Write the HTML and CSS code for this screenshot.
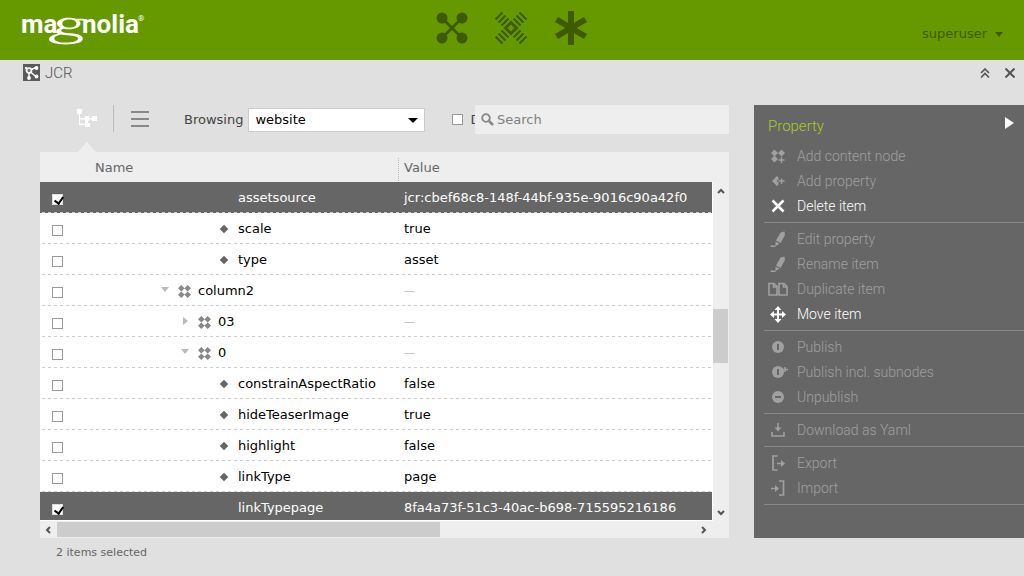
FILE: index.html
```html
<!DOCTYPE html>
<html lang="en">
<head>
<meta charset="utf-8">
<title>JCR</title>
<link rel="stylesheet" href="styles.css">
</head>
<body>
<svg class="defs" aria-hidden="true">
  <symbol id="node" viewBox="0 0 13 13"><path fill="currentColor" d="M3.300 0l3.200 3.200L9.700 0l3.300 3.300-3.300 3.300-3.200-3.200-3.200 3.200L0 3.300zM3.300 6.400l3.200 3.200 3.200-3.200L13 9.700 9.700 13 6.500 9.800 3.300 13 0 9.700z"/></symbol>
  <symbol id="pencil" viewBox="0 0 20 18"><path fill="currentColor" d="M12.500 1.500L16.500.500 17 4l-4.500 8-4.500-2.500zM7.500 10.500l4 2.300L7.500 15zM2.500 14.500h5V16h-5z"/></symbol>
</svg>
<header class="topbar">
  <a class="logo" href="#" aria-label="magnolia">
    <svg width="124" height="34" viewBox="0 0 124 34">
      <text class="logo-text" x="-1" y="20">ma</text>
      <text class="logo-text" x="60" y="20">nolia</text>
      <text class="logo-reg" x="116" y="8">®</text>
      <path fill="#fff" fill-rule="evenodd" d="M47 4.700c2.500 0 4.700.3 6.500 1H62v1.800h-5c1 .9 1.500 1.900 1.500 3 0 3.300-4.800 5.800-11.500 5.800-1.900 0-3.700-.2-5.200-.6-1.700.4-2.600.9-2.600 1.700 0 1.400 2.500 2.100 6.500 2.500 8.600.6 15.100 1.600 15.100 5.800 0 3.600-7 5.700-17.300 5.700-9.600 0-16.500-1.800-16.500-5.100 0-2.700 3.500-4.600 8.700-5.600-1-.6-1.500-1.300-1.500-2.200 0-1.600 1.700-2.700 4.400-3.400-2.300-1-3.600-2.600-3.600-4.500 0-3.400 4.800-5.900 11.500-5.900zM47.300 6.500c-4.300 0-7 1.600-7 4 0 2.500 2.700 4.100 7 4.100 4.400 0 7.100-1.600 7.100-4.100 0-2.400-2.700-4-7.100-4zM39 21.500c-4.300.7-6.700 2-6.700 3.900 0 2.700 4.700 4.200 11.700 4.200s12-1.500 12-4c0-2.300-4.500-2.900-10.500-3.400-2.400-.2-4.600-.3-6.500-.7z"/>
    </svg>
  </a>
  <nav class="apps" aria-label="Main">
    <button aria-label="Apps"><svg width="32" height="32" viewBox="0 0 32 32"><g fill="currentColor"><circle cx="6" cy="6" r="5.500"/><circle cx="26" cy="6" r="5.500"/><circle cx="6" cy="26" r="5.500"/><circle cx="26" cy="26" r="5.500"/></g><path d="M6 6l20 20M26 6L6 26" stroke="currentColor" stroke-width="3"/></svg></button>
    <button aria-label="Pulse"><svg width="34" height="34" viewBox="0 0 34 34" fill="none" stroke="currentColor"><path stroke-width="3" d="M17 11.500l5.500 5.500-5.500 5.500-5.500-5.500z"/><path stroke-width="2.200" d="M14.500 7.500l-7 7M11.500 4.500l-7 7M8.500 1.500l-7 7M19.500 7.500l7 7M22.500 4.500l7 7M25.500 1.500l7 7M7.500 19.500l7 7M4.500 22.500l7 7M1.500 25.500l7 7M26.500 19.500l-7 7M29.500 22.500l-7 7M32.500 25.500l-7 7"/></svg></button>
    <button aria-label="Favorites"><svg width="34" height="34" viewBox="0 0 34 34" stroke="currentColor" stroke-width="6"><path d="M17 0v34M2.500 8.500l29 17M2.500 25.500l29-17"/></svg></button>
  </nav>
  <button class="user">superuser <svg width="8" height="5" viewBox="0 0 8 5"><path fill="currentColor" d="M0 0h8L4 5z"/></svg></button>
</header>

<div class="appbar">
  <svg width="17" height="17" viewBox="0 0 17 17"><path fill="#5b5b5b" d="M0 0h17v17H0z"/><path d="M6 6.500l7-3M6 6.500V14M7.500 8l6 5" stroke="#fff" stroke-width="1.500" fill="none"/><circle cx="6" cy="6.500" r="2.500" fill="#777" stroke="#fff" stroke-width="1.700"/><g fill="#fff"><circle cx="13.500" cy="4" r="1.900"/><circle cx="13.500" cy="12.500" r="1.900"/><circle cx="6" cy="14" r="1.900"/><circle cx="3" cy="4" r="1.300"/></g></svg>
  <h1>JCR</h1>
  <button class="window-button" aria-label="Collapse"><svg width="10" height="10" viewBox="0 0 10 10"><path d="M1 5l4-4 4 4M1 9.500l4-4 4 4" fill="none" stroke="currentColor" stroke-width="1.600"/></svg></button>
  <button class="window-button" aria-label="Close"><svg width="10" height="10" viewBox="0 0 10 10"><path d="M.5.500l9 9M9.500.500l-9 9" stroke="currentColor" stroke-width="2"/></svg></button>
</div>

<div class="app">
  <main class="browser">
    <div class="toolbar">
      <button class="view active" aria-label="Tree view"><svg width="20" height="19" viewBox="0 0 20 19"><path fill="#fff" d="M0 0h5v5H3v4h5V7h4v2h3V7h5v5h-5v-1.500h-3V12h-1v2h2v4H8v-2H2V5H0zM3 10.500v4h5V12v-1.500z"/></svg></button>
      <button class="view" aria-label="List view"><svg width="18" height="16" viewBox="0 0 18 16"><path d="M0 1h18M0 8h18M0 15h18" stroke="#888" stroke-width="2"/></svg></button>
      <label class="browsing" for="workspace">Browsing</label>
      <div class="select"><select id="workspace"><option>website</option></select><svg width="10" height="5" viewBox="0 0 10 5"><path d="M0 0h10L5 5z"/></svg></div>
      <label class="deleted"><input type="checkbox"><span>D</span></label>
      <div class="search"><svg width="13" height="13" viewBox="0 0 13 13"><circle cx="5" cy="5" r="3.800" fill="none" stroke="#888" stroke-width="1.800"/><path d="M8 8l4 4" stroke="#888" stroke-width="2.500"/></svg><input type="search" placeholder="Search" aria-label="Search"></div>
    </div>
    <div class="frame">
      <div class="rows">
        <table>
          <colgroup><col class="col-check"><col class="col-name"><col></colgroup>
          <thead><tr><th></th><th>Name</th><th class="value">Value</th></tr></thead>
          <tbody>
            <tr class="selected"><td><input type="checkbox" checked aria-label="assetsource"></td><td class="l4">assetsource</td><td>jcr:cbef68c8-148f-44bf-935e-9016c90a42f0</td></tr>
            <tr><td><input type="checkbox" aria-label="scale"></td><td class="l3"><i class="prop"></i>scale</td><td>true</td></tr>
            <tr><td><input type="checkbox" aria-label="type"></td><td class="l3"><i class="prop"></i>type</td><td>asset</td></tr>
            <tr><td><input type="checkbox" aria-label="column2"></td><td class="l1"><i class="open"></i><svg class="node"><use href="#node"/></svg>column2</td><td class="empty">—</td></tr>
            <tr><td><input type="checkbox" aria-label="03"></td><td class="l2"><i class="closed"></i><svg class="node"><use href="#node"/></svg>03</td><td class="empty">—</td></tr>
            <tr><td><input type="checkbox" aria-label="0"></td><td class="l2"><i class="open"></i><svg class="node"><use href="#node"/></svg>0</td><td class="empty">—</td></tr>
            <tr><td><input type="checkbox" aria-label="constrainAspectRatio"></td><td class="l3"><i class="prop"></i>constrainAspectRatio</td><td>false</td></tr>
            <tr><td><input type="checkbox" aria-label="hideTeaserImage"></td><td class="l3"><i class="prop"></i>hideTeaserImage</td><td>true</td></tr>
            <tr><td><input type="checkbox" aria-label="highlight"></td><td class="l3"><i class="prop"></i>highlight</td><td>false</td></tr>
            <tr><td><input type="checkbox" aria-label="linkType"></td><td class="l3"><i class="prop"></i>linkType</td><td>page</td></tr>
            <tr class="selected"><td><input type="checkbox" checked aria-label="linkTypepage"></td><td class="l4">linkTypepage</td><td>8fa4a73f-51c3-40ac-b698-715595216186</td></tr>
          </tbody>
        </table>
      </div>
      <div class="vscroll">
        <svg width="8" height="6" viewBox="0 0 8 6"><path d="M1 5l3-3 3 3"/></svg>
        <div class="vtrack"><div class="vthumb"></div></div>
        <svg width="8" height="6" viewBox="0 0 8 6"><path d="M1 1l3 3 3-3"/></svg>
      </div>
      <div class="hscroll">
        <svg width="6" height="8" viewBox="0 0 6 8"><path d="M5 1L2 4l3 3"/></svg>
        <div class="htrack"><div class="hthumb"></div></div>
        <svg width="6" height="8" viewBox="0 0 6 8"><path d="M1 1l3 3-3 3"/></svg>
      </div>
    </div>
  </main>

  <aside class="actions">
    <div class="actions-head"><h2>Property</h2><button aria-label="Hide actions"><svg width="9" height="12" viewBox="0 0 9 12"><path fill="#fff" d="M0 0l9 6-9 6z"/></svg></button></div>
    <div class="group">
      <button disabled><svg viewBox="0 0 20 18"><path fill="currentColor" d="M6.500 1.500L10 5l3.500-3.500L17 5l-3.500 3.500L10 5 6.500 8.500 3 5zM6.500 7.500L10 11l-3.500 3.500L3 11zM6 5h1v6H6zM12.800 9h1.400v2.300h2.300v1.400h-2.300V15h-1.400v-2.300h-2.300v-1.400h2.300z"/></svg>Add content node</button>
      <button disabled><svg viewBox="0 0 20 18"><path fill="currentColor" d="M9 3L4 8l5 5 1.500-1.500V9H9V7h1.500V4.500zM12.800 5.500h1.400v1.800h2.300v1.400h-2.300v2.300h-1.400V8.700h-2.300V7.300h2.300z"/></svg>Add property</button>
      <button><svg viewBox="0 0 20 18"><path d="M4.500 2.500l11 11M15.500 2.500l-11 11" stroke="currentColor" stroke-width="2.600"/></svg>Delete item</button>
    </div>
    <div class="group">
      <button disabled><svg><use href="#pencil"/></svg>Edit property</button>
      <button disabled><svg><use href="#pencil"/></svg>Rename item</button>
      <button disabled><svg viewBox="0 0 20 18"><path d="M1 2.500h5L9 5.500V14H1zM11 2.500h5l3 3V14h-8zM5.500 3v3H9M15.500 3v3H19" fill="none" stroke="currentColor" stroke-width="1.600"/></svg>Duplicate item</button>
      <button><svg viewBox="0 0 20 18"><path d="M10 3v11M4 8.500h12" stroke="currentColor" stroke-width="2"/><path fill="currentColor" d="M10 0l3.500 4h-7zM10 17l3.500-4h-7zM2 8.500L6 5v7zM18 8.500L14 5v7z"/></svg>Move item</button>
    </div>
    <div class="group">
      <button disabled><svg viewBox="0 0 20 18"><circle cx="10" cy="8" r="6" fill="currentColor"/><path d="M10 5v6" stroke="#666" stroke-width="2"/></svg>Publish</button>
      <button disabled><svg viewBox="0 0 20 18"><circle cx="10" cy="8" r="6" fill="currentColor"/><path d="M10 5v6" stroke="#666" stroke-width="2"/><path d="M17 3v5M14 5.500h6" stroke="currentColor" stroke-width="1.500"/></svg>Publish incl. subnodes</button>
      <button disabled><svg viewBox="0 0 20 18"><circle cx="10" cy="8" r="6" fill="currentColor"/><path d="M7 8h6" stroke="#666" stroke-width="2"/></svg>Unpublish</button>
    </div>
    <div class="group">
      <button disabled><svg viewBox="0 0 20 18"><path d="M4 10v4h12v-4M10 1v7" fill="none" stroke="currentColor" stroke-width="1.600"/><path fill="currentColor" d="M6.500 5.500h7L10 9.500z"/></svg>Download as Yaml</button>
    </div>
    <div class="group">
      <button disabled><svg viewBox="0 0 20 18"><path d="M9.500 1H5v14h4.500M9 8.500h5" fill="none" stroke="currentColor" stroke-width="1.700"/><path fill="currentColor" d="M13 5l4 3.500-4 3.500z"/></svg>Export</button>
      <button disabled><svg viewBox="0 0 20 18"><path d="M11 1h4.500v14H11M3 8.500h5" fill="none" stroke="currentColor" stroke-width="1.700"/><path fill="currentColor" d="M7 5l4 3.500L7 12z"/></svg>Import</button>
    </div>
  </aside>
</div>
<footer class="status">2 items selected</footer>
</body>
</html>
```
FILE: styles.css
```css
* { box-sizing: border-box; }
body {
  margin: 0;
  height: 100vh;
  display: flex;
  flex-direction: column;
  background: #e0e0e0;
  color: #000;
  font: 13px/18px "DejaVu Sans", sans-serif;
  overflow: hidden;
}
button, input, select { font: inherit; color: inherit; margin: 0; }
button { padding: 0; border: 0; background: none; display: flex; align-items: center; }
svg { display: block; flex: none; }
h1, h2 { margin: 0; font-weight: 400; }
.defs { position: absolute; width: 0; height: 0; }

.topbar {
  flex: none;
  height: 60px;
  display: grid;
  grid-template-columns: 1fr auto 1fr;
  align-items: center;
  padding: 0 21px 0 22px;
  background: #690;
  color: #3e5b00;
}
.logo svg { overflow: visible; }
.logo-text { font: 700 26px Roboto, sans-serif; fill: #fff; }
.logo-reg { font: 8px Roboto, sans-serif; fill: #fff; }
.apps { display: flex; gap: 26px; padding: 0 1px 4px 0; }
.user { justify-self: end; gap: 8px; padding-top: 8px; }

.appbar {
  flex: none;
  height: 45px;
  display: flex;
  align-items: flex-start;
  gap: 5px;
  padding: 4px 9px 0 23px;
  color: #555;
}
.appbar h1 { flex: 1; font: 300 15px/18px Roboto, sans-serif; }
.window-button { height: 17px; margin-left: 10px; }

.app { flex: 1; min-height: 0; display: flex; gap: 25px; padding-left: 40px; }
.browser { flex: 1; min-width: 0; display: flex; flex-direction: column; }

.toolbar { flex: none; height: 47px; display: flex; align-items: flex-start; color: #444; }
.view { flex: none; position: relative; height: 27px; width: 52px; justify-content: center; }
.view.active { width: 74px; padding-left: 20px; border-right: 1px solid #bbb; }
.view.active::after {
  content: "";
  position: absolute;
  left: 38px;
  top: 37px;
  border: 9px solid transparent;
  border-top: 0;
  border-bottom: 10px solid #eee;
}
.browsing { padding: 6px 5px 0 18px; }
.select { flex: none; position: relative; margin-top: 3px; }
.select select {
  display: block;
  appearance: none;
  width: 177px;
  height: 24px;
  padding: 0 6px;
  border: 1px solid #ccc;
  border-radius: 0;
  background: #fff;
  color: #000;
}
.select svg { position: absolute; right: 7px; top: 10px; pointer-events: none; }
.deleted { flex: 1; min-width: 0; display: flex; gap: 7px; overflow: hidden; padding: 6px 0 0 27px; }
.search { flex: none; display: flex; align-items: center; gap: 3px; width: 254px; height: 29px; padding-left: 6px; background: #eee; }
.search input { flex: 1; min-width: 0; padding: 0; border: 0; background: none; outline: 0; }
.search input::placeholder { color: #808080; opacity: 1; }

input[type="checkbox"] {
  appearance: none;
  flex: none;
  display: block;
  width: 11px;
  height: 11px;
  margin-top: 3px;
  border: 1px solid #999;
  background: #fff;
}
input[type="checkbox"]:checked { border-color: #ddd; }
input[type="checkbox"]:checked::after {
  content: "";
  display: block;
  width: 4px;
  height: 7px;
  margin-left: 3px;
  border: solid #000;
  border-width: 0 2px 2px 0;
  transform: rotate(35deg);
}

.frame {
  flex: 1;
  min-height: 0;
  display: grid;
  grid-template-columns: minmax(0, 1fr) 17px;
  grid-template-rows: minmax(0, 1fr) 17px;
  background: #eee;
}
.rows { overflow: hidden; border-bottom: 1px solid #fff; }
table { width: 100%; table-layout: fixed; border-collapse: collapse; }
.col-check { width: 49px; }
.col-name { width: 309px; }
th { height: 30px; padding: 2px 6px 0; text-align: left; font-weight: 400; color: #666; }
th.value { background: repeating-linear-gradient(#bbb 0 1px, transparent 1px 2px) no-repeat 0 6px / 1px 24px; }
td { height: 31px; padding: 0 6px; white-space: nowrap; }
tbody tr {
  background: #fff repeating-linear-gradient(90deg, transparent 0 2px, #ccc 2px 5px, transparent 5px 6px) no-repeat 0 100% / 100% 1px;
}
tbody tr.selected { background-color: #666; color: #fff; }
td:first-child { padding-left: 12px; }
td i, .node { display: inline-block; vertical-align: middle; }
.node { width: 13px; height: 13px; margin-right: 7px; color: #888; }
.l1 { padding-left: 72px; }
.l2 { padding-left: 92px; }
.l3 { padding-left: 132px; }
.l4 { padding-left: 149px; }
.prop { width: 6px; height: 6px; margin-right: 11px; background: #666; transform: rotate(45deg); }
.open { margin: 0 9px 4px 0; border: 4px solid transparent; border-top: 5px solid #bbb; border-bottom: 0; }
.closed { margin: 0 10px 2px 2px; border: 4px solid transparent; border-left: 5px solid #bbb; border-right: 0; }
.empty { color: #bbb; font-size: 11px; }

.vscroll svg, .hscroll svg { fill: none; stroke: #555; stroke-width: 2; }
.vscroll {
  display: flex;
  flex-direction: column;
  align-items: center;
  gap: 5px;
  margin-top: 30px;
  padding: 6px 1px 5px 0;
  border-left: 1px solid #fff;
}
.vtrack { flex: 1; align-self: stretch; padding-top: 110px; }
.vthumb { height: 54px; background: #ccc; }
.hscroll { display: flex; align-items: center; gap: 6px; padding: 0 5px; }
.htrack { flex: 1; }
.hthumb { width: 60%; height: 15px; background: #ccc; }

.actions { flex: none; width: 270px; background: #666; font: 300 14px/25px Roboto, sans-serif; color: #fff; padding-left: 10px; }
.actions-head { display: flex; justify-content: space-between; align-items: flex-start; padding: 8px 10px 0 4px; height: 39px; }
.actions-head h2 { font: 300 15px/26px Roboto, sans-serif; color: #a8cc20; }
.actions-head button { padding-top: 4px; }
.group { padding-bottom: 3px; margin-bottom: 4px; border-bottom: 1px solid #888; }
.group button { width: 100%; height: 25px; gap: 9px; padding-left: 4px; text-align: left; }
.group svg { width: 20px; height: 18px; }
.group button:disabled { color: #a0a0a0; }

.status { flex: none; height: 38px; padding: 6px 56px; font-size: 11px; color: #666; }
```
